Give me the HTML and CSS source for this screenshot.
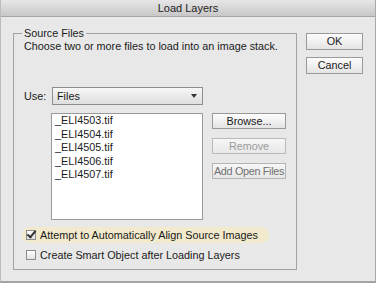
FILE: index.html
```html
<!DOCTYPE html>
<html>
<head>
	<meta charset="utf-8" />
	<title>Load Layers</title>
	<link rel="stylesheet" href="styles.css">
</head>
<body>
	<div class="dialog">
		<div class="titlebar">Load Layers</div>
		<div class="content">
			<fieldset class="source">
				<legend>Source Files</legend>
				<p class="hint">Choose two or more files to load into an image stack.</p>
				<div class="use-row">
					<span class="use-label">Use:</span>
					<div class="select">Files<span class="arrow"></span></div>
				</div>
				<div class="files-row">
					<ul class="file-list">
						<li>_ELI4503.tif</li>
						<li>_ELI4504.tif</li>
						<li>_ELI4505.tif</li>
						<li>_ELI4506.tif</li>
						<li>_ELI4507.tif</li>
					</ul>
					<div class="file-buttons">
						<button class="btn">Browse...</button>
						<button class="btn disabled">Remove</button>
						<button class="btn dim">Add Open Files</button>
					</div>
				</div>
				<div class="check highlight"><span class="box checked"></span>Attempt to Automatically Align Source Images</div>
				<div class="check"><span class="box"></span>Create Smart Object after Loading Layers</div>
			</fieldset>
			<div class="actions">
				<button class="btn main">OK</button>
				<button class="btn main">Cancel</button>
			</div>
		</div>
	</div>
</body>
</html>
```

FILE: styles.css
```css
* { margin:0; padding:0; box-sizing:border-box; }
body { background:#fff; font-family:"Liberation Sans", Arial, sans-serif; font-size:10.8px; color:#1a1a1a; }

.dialog { width:376px; height:283px; background:#e8e8e8; border-right:1px solid #a9a9a9; border-left:1px solid #bdbdbd; border-bottom:2px solid #a4a4a4; white-space:nowrap; }
.titlebar { height:17px; line-height:17px; text-align:center; font-size:11px; color:#222; background:linear-gradient(#e6e6e6, #c8c8c8); border-bottom:1px solid #a6a6a6; }

.content { display:flex; gap:9px; padding:9px 0 0 12px; }

.source { width:284px; height:244px; flex:none; border:1px solid #a2a2a2; padding:0 10px 0 10px; }
.source legend { padding:0 2px; margin-left:-2px; line-height:14px; }
.hint { line-height:14px; margin-top:-1px; }

.use-row { display:flex; align-items:center; margin-top:34px; }
.use-label { width:28px; }
.select { position:relative; width:151px; height:18px; line-height:16px; padding-left:4px; border:1px solid #8e8e8e; background:linear-gradient(#f7f7f7, #dedede); }
.arrow { position:absolute; right:5px; top:6px; border-left:3px solid transparent; border-right:3px solid transparent; border-top:4px solid #333; }

.files-row { display:flex; gap:9px; margin-top:8px; padding-left:27px; }
.file-list { list-style:none; width:152px; height:107px; flex:none; background:#fff; border:1px solid #9a9a9a; padding:0 0 0 3px; }
.file-list li { line-height:13.5px; }

.file-buttons { display:flex; flex-direction:column; gap:9px; }
.btn { display:block; font-family:inherit; font-size:10.8px; color:#1a1a1a; height:16px; line-height:14px; padding:0; border:1px solid #9a9a9a; background:linear-gradient(#fdfdfd, #e4e4e4); white-space:nowrap; }
.file-buttons .btn { width:74px; }
.btn.disabled { color:#9b9b9b; border-color:#b9b9b9; background:linear-gradient(#f6f6f6, #e8e8e8); }
.btn.dim { color:#707070; border-color:#b4b4b4; background:linear-gradient(#f6f6f6, #e8e8e8); letter-spacing:-0.3px; }

.check { display:flex; align-items:center; height:16px; line-height:16px; padding-left:2px; }
.check .box { width:10px; height:10px; flex:none; margin-right:4px; border:1px solid #8c8c8c; background:linear-gradient(#fff, #e2e2e2); position:relative; }
.check .box.checked::after { content:""; position:absolute; left:2px; top:-2px; width:3px; height:7px; border-right:2px solid #333; border-bottom:2px solid #333; transform:rotate(40deg); }
.highlight { width:fit-content; margin:7px 0 0 -2px; padding:0 11px 0 4px; background:#f2eacc; border-radius:8px; }
.check + .check { margin-top:4px; }

.actions { display:flex; flex-direction:column; gap:7px; padding-top:7px; }
.btn.main { width:57px; height:17px; line-height:15px; }
```
